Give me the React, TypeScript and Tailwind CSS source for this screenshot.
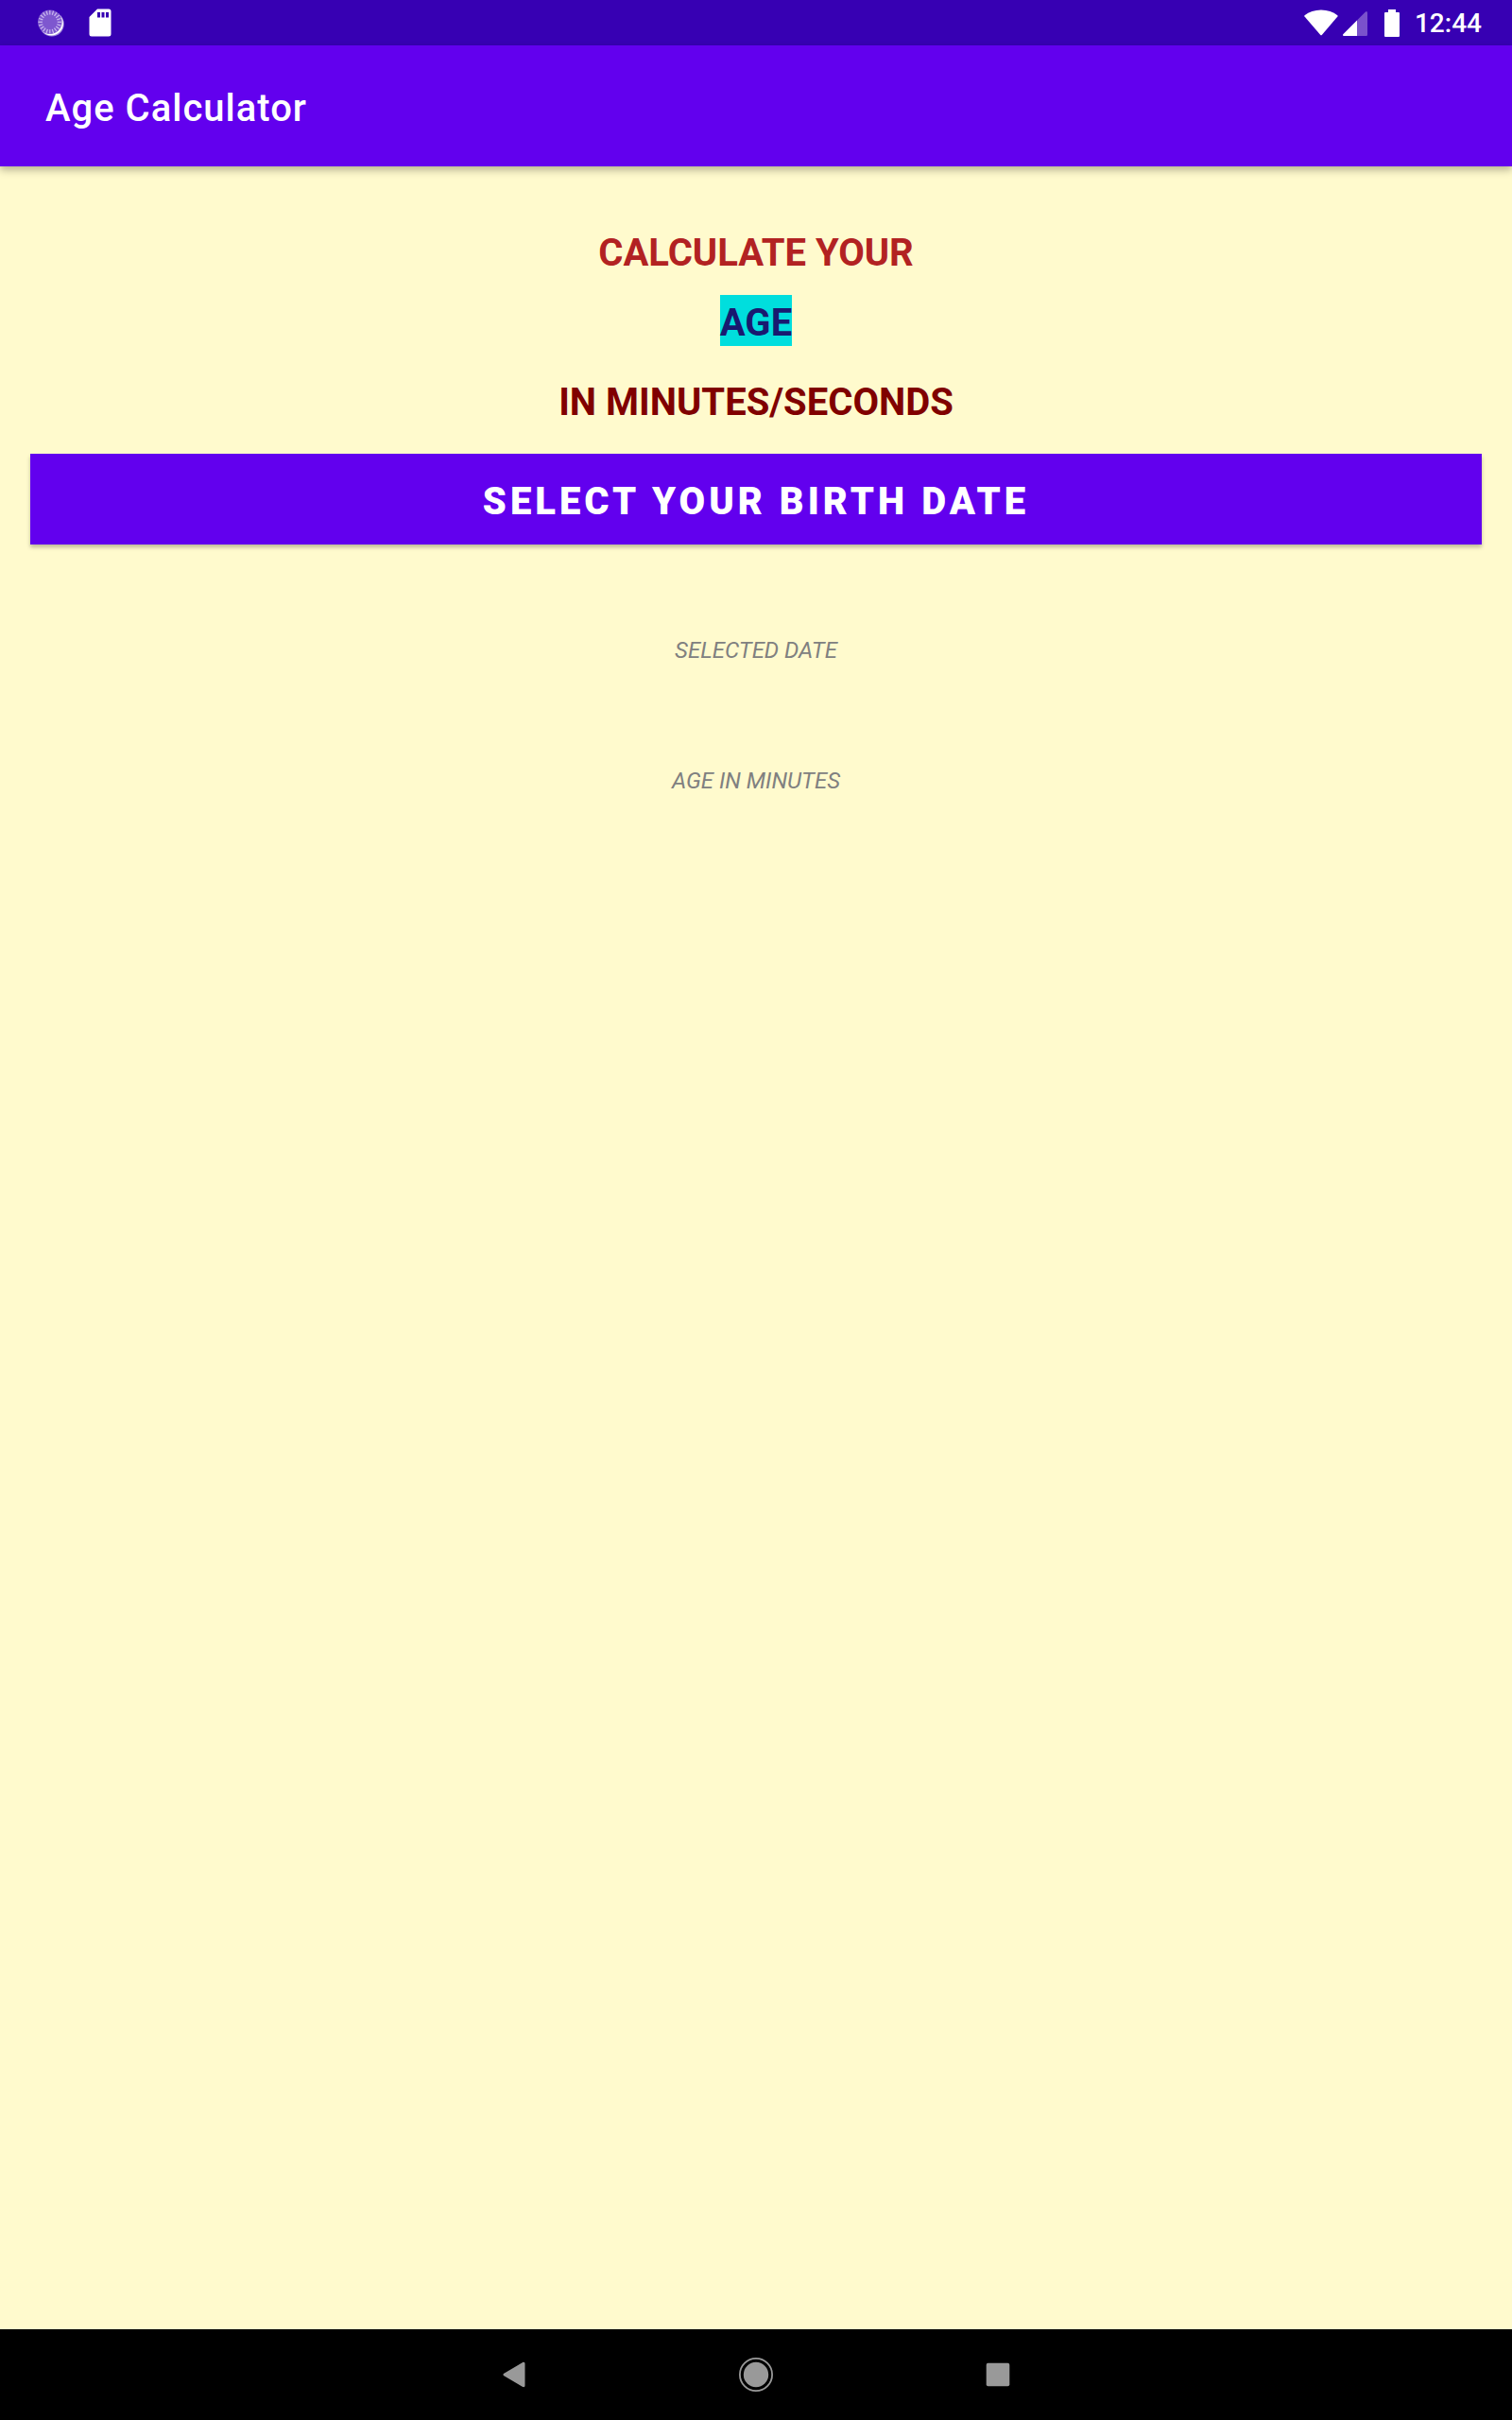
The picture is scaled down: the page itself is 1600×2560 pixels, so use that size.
import React from "react";

const tickAngles = Array.from({ length: 20 }, (_, i) => i * 18);

function LoadingIcon() {
  return (
    <svg width="28" height="29" viewBox="0 0 28 29" aria-hidden="true">
      <circle cx="14.8" cy="15.5" r="13" fill="#9f83dc" />
      <circle cx="14.300" cy="14.800" r="12.600" fill="#fff" />
      <circle cx="12.800" cy="13.300" r="12.800" fill="#7e57cf" />
      <g stroke="#cbb9ef" strokeWidth="1.200">
        {tickAngles.map((a) => (
          <line key={a} x1="12.800" y1="1" x2="12.800" y2="5.400" transform={`rotate(${a} 12.8 13.3)`} />
        ))}
      </g>
    </svg>
  );
}

function SdCardIcon() {
  return (
    <svg width="24" height="30" viewBox="0 0 24 30" aria-hidden="true">
      <path
        fillRule="evenodd"
        fill="#fff"
        d="M9 .5H21a2.500 2.500 0 0 1 2.500 2.500V27a2.500 2.500 0 0 1-2.500 2.500H3A2.500 2.500 0 0 1 .5 27V9ZM9 4v5.500h3V4Zm4.500 0v5.500h3V4Zm4.500 0v5.500h3V4Z"
      />
    </svg>
  );
}

function WifiIcon() {
  return (
    <svg width="36" height="28" viewBox="0 0 36 28" aria-hidden="true">
      <path fill="#fff" d="M.5 6.200C5.200 2.500 11.200.4 18 .4s12.800 2.100 17.300 5.800c.4.400.4.800.1 1.200L19 26.800c-.6.700-1.300.7-1.900 0L.5 7.400c-.3-.4-.4-.8 0-1.200Z" />
    </svg>
  );
}

function SignalIcon() {
  return (
    <svg width="26" height="26" viewBox="0 0 26 26" aria-hidden="true">
      <path fill="#7a52cc" d="M15 9.500 24 .6c.9-.8 2-.4 2 .8v23c0 1-.6 1.600-1.600 1.600H15Z" />
      <path fill="#fff" d="M15 9.500V26H1.400C0 26-.4 24.800.5 23.900Z" />
    </svg>
  );
}

function BatteryIcon() {
  return (
    <svg width="16" height="29" viewBox="0 0 16 29" aria-hidden="true">
      <path fill="#fff" d="M4 0h8v3h3q1 0 1 1v24q0 1-1 1H1q-1 0-1-1V4q0-1 1-1h3Z" />
    </svg>
  );
}

function StatusBar() {
  return (
    <div className="flex h-12 items-center justify-between bg-[#3700b3] pr-8 pl-10">
      <div className="flex items-center gap-[26px]">
        <LoadingIcon />
        <SdCardIcon />
      </div>
      <div className="flex items-center text-white">
        <WifiIcon />
        <div className="ml-[5px] pt-[2px]">
          <SignalIcon />
        </div>
        <div className="ml-[18px]">
          <BatteryIcon />
        </div>
        <time className="ml-4 pt-[2px] text-[28px] leading-8 font-medium">12:44</time>
      </div>
    </div>
  );
}

function NavigationBar() {
  const button = "flex h-24 w-64 items-center justify-center";
  return (
    <nav aria-label="System navigation" className="flex h-24 justify-center bg-black">
      <button type="button" aria-label="Back" className={button}>
        <svg width="24" height="28" viewBox="0 0 24 28" aria-hidden="true">
          <path fill="#999" d="M1.300 12.700 20.800 1.200c1.700-1 2.700-.2 2.700 1.300v23c0 1.500-1 2.300-2.700 1.300L1.300 15.300c-1.100-.7-1.100-1.900 0-2.600Z" />
        </svg>
      </button>
      <button type="button" aria-label="Home" className={button}>
        <svg width="36" height="36" viewBox="0 0 36 36" aria-hidden="true">
          <circle cx="18" cy="18" r="17.100" fill="none" stroke="#999" strokeWidth="1.800" />
          <circle cx="18" cy="18" r="13.200" fill="#999" />
        </svg>
      </button>
      <button type="button" aria-label="Overview" className={button}>
        <svg width="26" height="26" viewBox="0 0 26 26" aria-hidden="true">
          <rect x="0.700" y="0.700" width="24.600" height="24.600" rx="2" fill="#999" />
        </svg>
      </button>
    </nav>
  );
}

export default function App() {
  return (
    <div className="flex min-h-screen flex-col bg-[#fffacd] font-['Roboto',sans-serif]">
      <StatusBar />
      <header className="relative flex h-32 items-center bg-[#6200ee] px-12 pt-1.5 shadow-[0_4px_8px_rgba(0,0,0,0.28)]">
        <h1 className="text-[40px] leading-[48px] font-medium tracking-[1px] text-white">Age Calculator</h1>
      </header>
      <main className="flex flex-1 flex-col items-center px-8 pt-[62px]">
        <p className="pt-1.5 text-[40px] leading-[48px] font-bold text-[#b22222]">CALCULATE YOUR</p>
        <p className="mt-5 bg-[#00dedd] pt-1.5 text-[40px] leading-[48px] font-bold text-[#191970]">AGE</p>
        <p className="mt-[30px] pt-1.5 text-[40px] leading-[48px] font-bold text-[#800000]">IN MINUTES/SECONDS</p>
        <button
          type="button"
          className="mt-[30px] h-24 w-full bg-[#6200ee] pt-1.5 text-[40px] leading-[48px] font-black tracking-[4px] text-white shadow-[0_3px_4px_rgba(0,0,0,0.25)]"
        >
          SELECT YOUR BIRTH DATE
        </button>
        <p className="mt-24 text-2xl text-[#808080] italic">SELECTED DATE</p>
        <p className="mt-[106px] text-2xl text-[#808080] italic">AGE IN MINUTES</p>
      </main>
      <NavigationBar />
    </div>
  );
}
